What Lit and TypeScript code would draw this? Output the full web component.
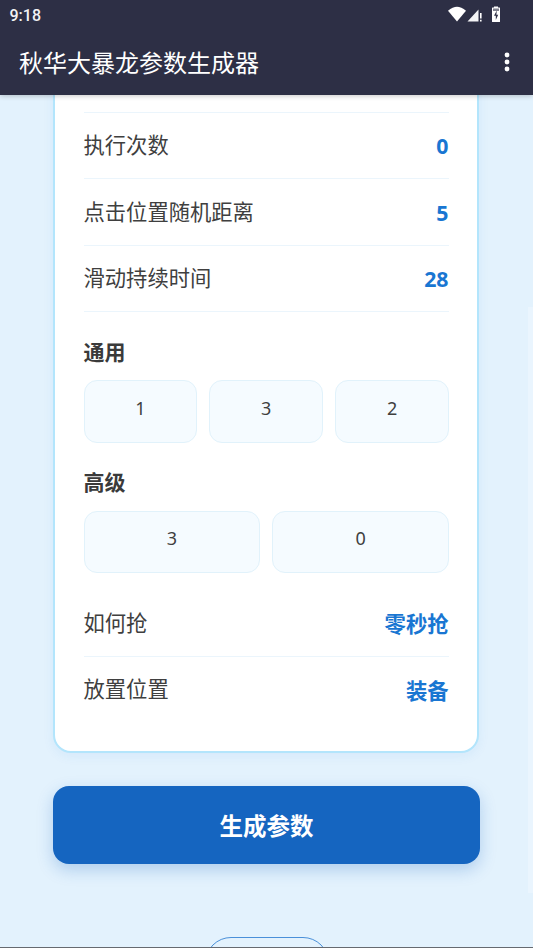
import { LitElement, html, css } from "lit";
import { customElement } from "lit/decorators.js";

@customElement("app-root")
export class AppRoot extends LitElement {
  static styles = css`
    :host {
      display: block;
      width: 533px;
      height: 948px;
      overflow: hidden;
      position: relative;
      background: #e3f2fd;
      font-family: "Noto Sans", "Noto Sans CJK SC", sans-serif;
      color: #333;
    }
    .top {
      position: relative;
      z-index: 2;
      height: 95px;
      background: #2d2f45;
      box-shadow: 0 1px 5px rgba(0, 0, 0, 0.22);
      color: #fff;
    }
    .status {
      height: 30px;
      display: flex;
      align-items: center;
      justify-content: space-between;
      padding: 0 0 0 9.5px;
      font: 500 16px Roboto, sans-serif;
      color: #f2f2f4;
    }
    .status svg {
      display: block;
      margin-right: 31px;
    }
    .bar {
      height: 65px;
      display: flex;
      align-items: center;
      justify-content: space-between;
      padding: 0 23px 2px 19px;
      box-sizing: border-box;
      font-size: 24px;
      font-family: "Noto Sans CJK SC", sans-serif;
      font-weight: 400;
    }
    .bar svg {
      display: block;
    }
    .scrollbar {
      position: absolute;
      right: 0;
      top: 307px;
      width: 5px;
      height: 586px;
      background: #eaf5fe;
    }
    .body {
      height: 853px;
      overflow: hidden;
      display: flex;
      flex-direction: column;
      align-items: center;
    }
    .card {
      box-sizing: border-box;
      align-self: flex-start;
      width: 426px;
      margin: -30px 0 0 53px;
      padding: 0 28px 27px 28.5px;
      border: 2.5px solid #b3e5fc;
      border-radius: 18px;
      background: #fff;
      box-shadow: 0 3px 12px rgba(25, 118, 210, 0.07);
      flex: none;
    }
    .row {
      box-sizing: border-box;
      height: 66.5px;
      display: flex;
      align-items: center;
      justify-content: space-between;
      border-bottom: 1px solid #ebf5fc;
      font-size: 21.3px;
      color: #3f3f3f;
    }
    .row.last {
      border-bottom: 0;
    }
    .lbl {
      position: relative;
      top: -1.5px;
    }
    .row.last .lbl {
      top: -2.5px;
    }
    .val {
      font-weight: 700;
      color: #1976d2;
      font-size: 21.3px;
      padding-right: 0.5px;
      position: relative;
      top: 0.5px;
    }
    .rows-top .row:first-child {
      height: 45.5px;
    }
    .sec {
      font-size: 21px;
      font-weight: 700;
      color: #3a3a3a;
      line-height: 28px;
      margin: 26px 0 14px;
    }
    .sec.next {
      margin-top: 25.5px;
      margin-bottom: 14.5px;
    }
    .opts {
      display: grid;
      grid-auto-flow: column;
      grid-auto-columns: 1fr;
      gap: 12px;
    }
    .opt {
      box-sizing: border-box;
      height: 62.5px;
      padding-bottom: 7px;
      display: flex;
      align-items: center;
      justify-content: center;
      background: #f5fbff;
      border: 1px solid #e1f2fb;
      border-radius: 13px;
      font-size: 18px;
      color: #3f3f3f;
    }
    .rows-bottom {
      margin-top: 17.5px;
    }
    .rows-bottom .val {
      top: -0.5px;
    }
    .cta {
      flex: none;
      box-sizing: border-box;
      width: 427px;
      height: 78px;
      margin-top: 33px;
      display: flex;
      align-items: center;
      justify-content: center;
      border-radius: 16px;
      background: #1565c0;
      box-shadow: 0 6px 16px rgba(21, 101, 192, 0.25);
      color: #fff;
      font-size: 23.5px;
      font-weight: 700;
    }
    .pill {
      flex: none;
      box-sizing: border-box;
      width: 124px;
      height: 60px;
      margin-top: 73px;
      border: 1.5px solid #4a90d9;
      border-radius: 26px;
      background: #e3f2fd;
    }
    .edge {
      position: absolute;
      left: 0;
      right: 0;
      bottom: 0;
      height: 1px;
      background: #666a70;
      z-index: 3;
    }
  `;

  render() {
    return html`
      <div class="top">
        <div class="status">
          <span>9:18</span>
          <svg width="54" height="18" viewBox="0 0 54 18" fill="#fff">
            <path d="M0 4.800C3 2 6.400 0.800 9 0.800s6 1.200 9 4L9 15.500z" />
            <path d="M19.500 15.500L30.500 3.500V15.500z" fill="#f4f4f6" />
            <path d="M32 7h1.600v5.500H32zM32 13.800h1.600v1.700H32z" />
            <path d="M46 0.500h4v1h1.500a.5.500 0 0 1 .5.500v13.500a.5.500 0 0 1-.5.500h-7a.5.500 0 0 1-.5-.500V2a.5.500 0 0 1 .5-.500H46z" />
            <rect x="45" y="2.500" width="6" height="2.500" fill="#2d2f45" opacity="0.6" />
            <path d="M48.800 4.500L46 9.800h1.800v4.200L50.200 8.800h-1.800z" fill="#2d2f45" />
          </svg>
        </div>
        <div class="bar">
          <span>秋华大暴龙参数生成器</span>
          <svg width="6" height="20" viewBox="0 0 6 20" fill="#fff">
            <circle cx="3" cy="3" r="2.400" />
            <circle cx="3" cy="10" r="2.400" />
            <circle cx="3" cy="17" r="2.400" />
          </svg>
        </div>
      </div>
      <div class="body">
        <div class="card">
          <div class="rows-top">
            <div class="row"></div>
            <div class="row"><span class="lbl">执行次数</span><span class="val">0</span></div>
            <div class="row"><span class="lbl">点击位置随机距离</span><span class="val">5</span></div>
            <div class="row"><span class="lbl">滑动持续时间</span><span class="val">28</span></div>
          </div>
          <div class="sec">通用</div>
          <div class="opts">
            <div class="opt">1</div>
            <div class="opt">3</div>
            <div class="opt">2</div>
          </div>
          <div class="sec next">高级</div>
          <div class="opts">
            <div class="opt">3</div>
            <div class="opt">0</div>
          </div>
          <div class="rows-bottom">
            <div class="row"><span class="lbl">如何抢</span><span class="val">零秒抢</span></div>
            <div class="row last"><span class="lbl">放置位置</span><span class="val">装备</span></div>
          </div>
        </div>
        <div class="cta">生成参数</div>
        <div class="pill"></div>
      </div>
      <div class="scrollbar"></div>
      <div class="edge"></div>
    `;
  }
}
